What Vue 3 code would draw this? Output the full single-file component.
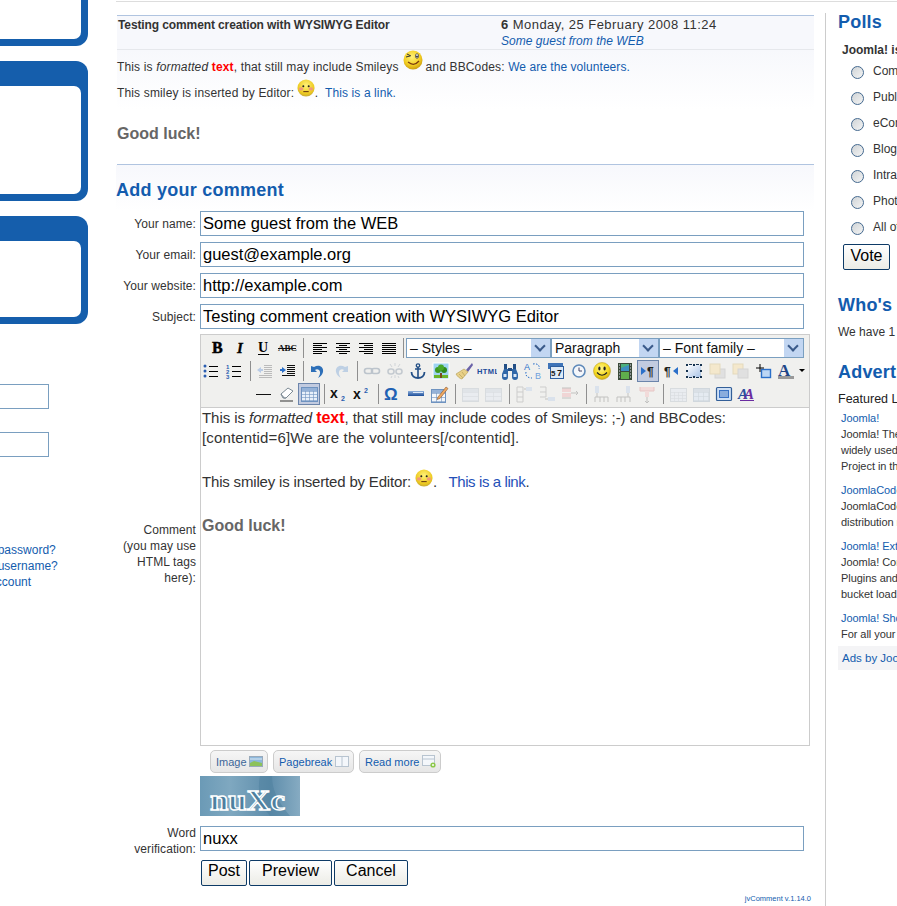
<script setup>
const t = (x, y, size, text, fill = '#000', extra = '') =>
  `<text x="${x}" y="${y}" font-size="${size}" fill="${fill}" font-family="Liberation Sans, sans-serif" ${extra}>${text}</text>`
const bars = (rows, color = '#000') =>
  rows.map(([x, y, w, h = 1]) => `<rect x="${x}" y="${y}" width="${w}" height="${h}" fill="${color}"/>`).join('')
const grid = (x, y, w, h, stroke, fill, cw = 4, ch = 3, head = '') => {
  let s = `<rect x="${x + 0.5}" y="${y + 0.5}" width="${w}" height="${h}" fill="${fill}" stroke="${stroke}"/>`
  if (head) s += `<rect x="${x + 1}" y="${y + 1}" width="${w - 1}" height="3" fill="${head}"/>`
  for (let i = x + cw; i < x + w; i += cw) s += `<rect x="${i}" y="${y + 4}" width="1" height="${h - 4}" fill="${stroke}" opacity=".6"/>`
  for (let j = y + 4; j < y + h; j += ch) s += `<rect x="${x + 1}" y="${j}" width="${w - 1}" height="1" fill="${stroke}" opacity=".6"/>`
  return s
}
const faint = (s) => `<g opacity=".65">${s}</g>`
const smile = `<defs><radialGradient id="sm" cx=".45" cy=".35" r=".7"><stop offset="0" stop-color="#fff68a"/><stop offset=".6" stop-color="#f5d920"/><stop offset="1" stop-color="#c9a410"/></radialGradient></defs><circle cx="10" cy="10" r="8.500" fill="url(#sm)" stroke="#b59a1c" stroke-width=".5"/><ellipse cx="7.400" cy="7.600" rx="1.100" ry="2" fill="#222"/><ellipse cx="12.600" cy="7.600" rx="1.100" ry="2" fill="#222"/><path d="M5 11.500q5 5.500 10 0" fill="none" stroke="#222" stroke-width="1.200"/>`
const serifB = 'font-weight="700" style="font-family:Liberation Serif,serif"'
const icons = {
  bold: t(4, 15, 16, 'B', '#000', serifB + ' stroke="#000" stroke-width=".5"'),
  italic: t(6, 15, 15, 'I', '#000', 'font-weight="700" font-style="italic" stroke="#000" stroke-width=".3" style="font-family:Liberation Serif,serif"'),
  underline: t(4, 14, 14, 'U', '#000', serifB) + bars([[4, 16, 11]]),
  strike: t(1, 13, 9, 'ABC', '#111', serifB) + bars([[1, 10, 18]], '#111'),
  left: bars([[3, 5, 14], [3, 7, 9], [3, 9, 14], [3, 11, 9], [3, 13, 14], [3, 15, 9]]),
  center: bars([[3, 5, 14], [6, 7, 8], [3, 9, 14], [6, 11, 8], [3, 13, 14], [6, 15, 8]]),
  right: bars([[3, 5, 14], [8, 7, 9], [3, 9, 14], [8, 11, 9], [3, 13, 14], [8, 15, 9]]),
  full: bars([[3, 5, 14], [3, 7, 14], [3, 9, 14], [3, 11, 14], [3, 13, 14], [3, 15, 14]]),
  bullets: `<circle cx="4" cy="5" r="1.500" fill="#2a5db0"/><circle cx="4" cy="10" r="1.500" fill="#2a5db0"/><circle cx="4" cy="15" r="1.500" fill="#2a5db0"/>` + bars([[8, 5, 9], [8, 10, 9], [8, 15, 9]]),
  numbers: t(2, 8, 6, '1', '#2a5db0', 'font-weight="700"') + t(2, 13, 6, '2', '#2a5db0', 'font-weight="700"') + t(2, 18, 6, '3', '#2a5db0', 'font-weight="700"') + bars([[8, 5, 9], [8, 10, 9], [8, 15, 9]]),
  outdent: bars([[9, 4, 8], [9, 6, 8], [9, 8, 8], [9, 10, 8], [9, 12, 8], [4, 14, 13], [4, 16, 13]], '#bbb') + `<path d="M2 9l4-3v2h2v2H6v2z" fill="#b8cbe6"/>`,
  indent: bars([[9, 4, 8], [9, 6, 8], [9, 8, 8], [9, 10, 8], [9, 12, 8], [4, 14, 13]], '#111') + `<path d="M8 9L4 6v2H2v2h2v2z" fill="#2a6fc9"/>`,
  undo: `<path d="M6 6c5-3 10 0 9 5-.6 3-3 5-5 6 2-3 3-6 1-8-1.500-1.300-3-.8-4 0l2 2H3V5z" fill="#2d6fb8"/>`,
  redo: `<path d="M14 6c-5-3-10 0-9 5 .6 3 3 5 5 6-2-3-3-6-1-8 1.500-1.300 3-.8 4 0l-2 2h6V5z" fill="#bed0e4"/>`,
  link: `<rect x="2.500" y="7.500" width="8" height="5" rx="2.500" fill="none" stroke="#bcc4cc" stroke-width="1.600"/><rect x="9.500" y="7.500" width="8" height="5" rx="2.500" fill="none" stroke="#bcc4cc" stroke-width="1.600"/>`,
  unlink: `<rect x="3" y="8" width="6" height="5" rx="2.500" fill="none" stroke="#c4cad0" stroke-width="1.600"/><rect x="11" y="8" width="6" height="5" rx="2.500" fill="none" stroke="#c4cad0" stroke-width="1.600"/><path d="M10 2v3M5 3l2 3M15 3l-2 3M10 14v3M6 17l1-2M14 17l-1-2" stroke="#d0d4d8"/>`,
  anchor: `<circle cx="10" cy="4.500" r="1.700" fill="none" stroke="#234f86" stroke-width="1.300"/><path d="M10 6v11M7 8h6" stroke="#234f86" stroke-width="1.600"/><path d="M3.500 11c0 4 3 6 6.500 6s6.500-2 6.500-6" fill="none" stroke="#234f86" stroke-width="1.800"/>`,
  image: `<rect x="2" y="2" width="16" height="16" fill="#9ed4f2" stroke="#fff"/><rect x="3" y="14" width="14" height="3" fill="#6cb52c"/><path d="M9 17h2v-5H9z" fill="#7a4b1e"/><circle cx="7" cy="9" r="3" fill="#3d9a24"/><circle cx="13" cy="9" r="3" fill="#2e8a1c"/><circle cx="10" cy="6.500" r="3" fill="#48a82c"/>`,
  cleanup: `<path d="M18 2l-6 7 2 2 5-7z" fill="#6a62a8"/><path d="M10 8l-8 5c1 2 4 5 6 5l6-7z" fill="#e8d088" stroke="#b09a50" stroke-width=".6"/><path d="M5 13l4 4M8 11l3 4" stroke="#b09a50" stroke-width=".6"/>`,
  html: t(0, 13, 7.500, 'HTML', '#1d4c9a', 'font-weight="700" letter-spacing=".4"'),
  find: `<path d="M4 3h3v5H4zM13 3h3v5h-3z" fill="#234f86"/><rect x="8" y="7" width="4" height="3" fill="#234f86"/><path d="M4 8h4v8a2 2 0 0 1-6 0v-3z" fill="#2f66a8"/><path d="M12 8h4l2 5v3a2 2 0 0 1-6 0z" fill="#2f66a8"/><rect x="3.500" y="13" width="3" height="3" fill="#dbe7f6"/><rect x="13.500" y="13" width="3" height="3" fill="#dbe7f6"/>`,
  replace: t(1, 9, 9, 'A', '#2a6fc9') + t(12, 18, 9, 'B', '#6fa0dc') + `<path d="M10 3c5-1 7 2 6 5M3 11c-1 4 2 6 6 6" fill="none" stroke="#2a6fc9" stroke-dasharray="1.500 1.500"/>`,
  date: `<rect x="2" y="2" width="15" height="6" fill="#3f74b8"/><rect x="4.500" y="5.500" width="13" height="12" fill="#dfeaf6" stroke="#2f5f9f"/>` + t(5, 15, 8, '5', '#222', 'font-weight="700"') + t(11, 15, 9, '7', '#111', 'font-weight="700"'),
  time: `<circle cx="10" cy="10" r="6" fill="#f4f7fb" stroke="#5f8aba" stroke-width="1.600"/><path d="M10 6.500V10h3" fill="none" stroke="#446" />`,
  smiley: smile,
  media: `<rect x="3" y="2" width="14" height="17" fill="#3a4a3a"/><rect x="6" y="3" width="8" height="7" fill="#4cb07c"/><rect x="6" y="11" width="8" height="7" fill="#5fae4c"/><path d="M6 7l8-3v6H6z" fill="#3d8fc0"/><path d="M4 4h1M4 7h1M4 10h1M4 13h1M4 16h1M15 4h1M15 7h1M15 10h1M15 13h1M15 16h1" stroke="#dde" />`,
  ltr: `<path d="M3 6l5 4-5 4z" fill="#2a6fc9"/>` + t(9, 15, 12, '¶', '#222', 'font-weight="700"'),
  rtl: `<path d="M17 6l-5 4 5 4z" fill="#2a6fc9"/>` + t(3, 15, 12, '¶', '#222', 'font-weight="700"'),
  fullscreen: `<defs><linearGradient id="fs" x1="0" y1="0" x2="1" y2="1"><stop offset="0" stop-color="#fff"/><stop offset="1" stop-color="#a9c3e6"/></linearGradient></defs><rect x="3" y="4" width="14" height="12" fill="url(#fs)"/>` + bars([[2, 3, 2, 2], [9, 3, 2, 2], [16, 3, 2, 2], [2, 9, 2, 2], [16, 9, 2, 2], [2, 15, 2, 2], [9, 15, 2, 2], [16, 15, 2, 2]], '#16324f') + bars([[5, 3, 3], [12, 3, 3], [5, 16, 3], [12, 16, 3]], '#16324f'),
  forward: `<rect x="8" y="8" width="10" height="9" fill="#e0e0e0" stroke="#d4d4d4"/><rect x="3" y="3" width="10" height="10" fill="#f4e8cc" stroke="#e4d9bc"/>`,
  backward: `<rect x="3" y="3" width="10" height="10" fill="#f4e8cc" stroke="#e4d9bc"/><rect x="8" y="8" width="10" height="9" fill="#e0e0e0" stroke="#d4d4d4"/>`,
  absolute: `<rect x="8.500" y="8.500" width="9" height="8" fill="#bcd6f4" stroke="#2a6fc9" stroke-width="1.400"/><path d="M7 3v8M3 7h8" stroke="#000"/>`,
  color: t(2, 15, 17, 'A', '#1f4688', serifB) + bars([[2, 15, 16, 3]], '#999'),
  hr: bars([[3, 10, 15]], '#111'),
  eraser: `<path d="M5 10l7-6 5 3-7 7H7z" fill="#fff" stroke="#7c8a94"/><path d="M5 10l3 4 2 0" fill="#c8d0d6" stroke="#7c8a94"/><path d="M4 17h13" stroke="#333"/>`,
  table: grid(2, 3, 16, 14, '#6f93c0', '#e8f0fa', 4, 3, '#95b2d8'),
  sub: t(1, 14, 14, 'x', '#111', 'font-weight="700"') + t(12, 17, 7, '2', '#2a5db0', 'font-weight="700"'),
  sup: t(1, 15, 14, 'x', '#111', 'font-weight="700"') + t(12, 9, 7, '2', '#2a5db0', 'font-weight="700"'),
  omega: t(1, 16, 17, 'Ω', '#1f62b4', 'font-weight="700"'),
  line: `<defs><linearGradient id="ln" x1="0" y1="0" x2="0" y2="1"><stop offset="0" stop-color="#8fb0dc"/><stop offset="1" stop-color="#1a4c98"/></linearGradient></defs><rect x="2" y="7" width="16" height="5" fill="url(#ln)"/><rect x="7" y="8" width="10" height="1" fill="#dbe7f6"/>`,
  edit: grid(2, 5, 14, 13, '#6f93c0', '#f4f7fb', 5, 4, '#95b2d8') + `<path d="M9 13l8-10 2 1.500-8 10-3 1z" fill="#f0a860" stroke="#8a5a30" stroke-width=".6"/>`,
  t1: faint(grid(2, 4, 16, 13, '#ccd2d8', '#e6ebf2', 16, 4, '#d8dee6')),
  t2: faint(grid(2, 4, 16, 13, '#ccd2d8', '#e6ebf2', 8, 4, '#d8dee6')),
  r1: faint(`<path d="M3 3h6M3 8h6M3 13h6M3 18h6M3 3v15M9 3v15" fill="none" stroke="#bbb"/><rect x="12" y="3" width="6" height="4" fill="#cfdcec"/><path d="M10 5h2" stroke="#aaa"/>`),
  r2: faint(`<path d="M3 3h6M3 8h6M3 13h6M9 3v10" fill="none" stroke="#bbb"/><rect x="11" y="13" width="7" height="4" fill="#cfdcec"/><path d="M8 15h3" stroke="#aaa"/>`),
  r3: faint(`<rect x="2" y="4" width="9" height="4" fill="#f0c8c8"/><rect x="2" y="9" width="9" height="4" fill="#f0c8c8"/><path d="M2 4h9M2 14h9M11 9h7M16 7l2 2-2 2" fill="none" stroke="#aaa"/>`),
  c1: faint(`<rect x="4" y="2" width="4" height="7" fill="#cfdcec"/><path d="M6 9v4M4 18v-5h13v5M9 18v-5M13 18v-5" fill="none" stroke="#aaa"/>`),
  c2: faint(`<rect x="12" y="2" width="4" height="7" fill="#cfdcec"/><path d="M14 9v4M3 18v-5h13v5M7 18v-5M11 18v-5" fill="none" stroke="#aaa"/>`),
  c3: faint(`<path d="M3 3v4h14V3" fill="#f4d0d0" stroke="#e2b0b0"/><rect x="8" y="7" width="4" height="6" fill="#f4d0d0"/><path d="M10 13v6M8 17l2 2 2-2" fill="none" stroke="#aaa"/>`),
  t3: faint(grid(2, 4, 16, 13, '#ccd2d8', '#e6ebf2', 4, 3)),
  t4: faint(grid(2, 4, 16, 13, '#c0cad4', '#dfe8f4', 5, 4, '#cfd8e2')),
  frame: `<rect x="2.500" y="3.500" width="15" height="13" rx="1" fill="#cfe0f5" stroke="#335f98" stroke-width="1.200"/><rect x="5" y="6" width="10" height="8" fill="#3a72c4"/><path d="M6 8h8M6 10h8M6 12h8" stroke="#dbe7f6"/>`,
  styleprops: t(1, 15, 15, 'A', '#2a4f9c', 'font-weight="700" font-style="italic" style="font-family:Liberation Serif,serif"') + t(7, 15, 15, 'A', '#6a2ca0', 'font-weight="700" font-style="italic" style="font-family:Liberation Serif,serif"') + bars([[3, 16, 14]], '#6a2ca0')
}
const s = (w) => ({ sep: w })
const row1a = ['bold', 'italic', 'underline', 'strike', s(10), 'left', 'center', 'right', 'full', s(6)]
const row2 = ['bullets', 'numbers', s(8), 'outdent', 'indent', s(7), 'undo', 'redo', s(8), 'link', 'unlink', 'anchor', 'image', 'cleanup', 'html', 'find', 'replace', 'date', 'time', 'smiley', 'media', 'ltr', 'rtl', 'fullscreen', 'forward', 'backward', 'absolute', 'color']
const row3 = ['hr', 'eraser', 'table', s(7), 'sub', 'sup', s(8), 'omega', 'line', 'edit', s(8), 't1', 't2', s(8), 'r1', 'r2', 'r3', s(8), 'c1', 'c2', 'c3', s(8), 't3', 't4', 'frame', 'styleprops']
const active = ['ltr', 'table']
const polls = ['Community Sites', 'Public Brand Sites', 'eCommerce', 'Blogs', 'Intranets', 'Photo and Media Sites', 'All of the Above!']
const ads = [
  { title: 'Joomla!', lines: ['Joomla! The most popular and', 'widely used Open Source CMS', 'Project in the world.'] },
  { title: 'JoomlaCode', lines: ['JoomlaCode, development and', 'distribution made easy.'] },
  { title: 'Joomla! Extensions', lines: ['Joomla! Components, Modules,', 'Plugins and Languages by the', 'bucket load.'] },
  { title: 'Joomla! Shop', lines: ['For all your Joomla! merchandise.'] }
]
</script>

<template>
  <div class="page">
    <aside class="left">
      <div class="box first"><div class="inner i1"></div></div>
      <div class="box"><div class="inner i2"></div></div>
      <div class="box"><div class="inner i3"></div></div>
      <input class="login" type="text" />
      <input class="login second" type="text" />
      <ul class="loginlinks">
        <li>Forgot your password?</li>
        <li>Forgot your username?</li>
        <li>Create an account</li>
      </ul>
    </aside>

    <div class="rest">
      <main class="center">
        <div class="chead">
          <div class="ctitle">Testing comment creation with WYSIWYG Editor</div>
          <div class="cmeta">
            <div class="when"><b>6</b> Monday, 25 February 2008 11:24</div>
            <div class="author">Some guest from the WEB</div>
          </div>
        </div>
        <div class="cbody">
          <p class="l1">This is <em>formatted</em> <b class="red">text</b>, that still may include Smileys
            <svg class="wink" width="20" height="20" viewBox="0 0 20 20">
              <defs><radialGradient id="wk" cx=".45" cy=".35" r=".7"><stop offset="0" stop-color="#fff27a"/><stop offset=".6" stop-color="#f4cf22"/><stop offset="1" stop-color="#c2920e"/></radialGradient></defs>
              <circle cx="10" cy="10" r="9.500" fill="url(#wk)"/>
              <path d="M3 7l4-1M4 4l4 2" stroke="#333" fill="none"/>
              <ellipse cx="14" cy="6" rx="1.600" ry="2.300" fill="#fff" stroke="#333" stroke-width=".7"/><circle cx="14" cy="6.500" r=".9" fill="#222"/>
              <path d="M5 12q6 5 11-1" stroke="#7a3b10" stroke-width="1.200" fill="none"/>
            </svg>
            and BBCodes: <span class="lnk narrow">We are the volunteers.</span></p>
          <p class="l2">This smiley is inserted by Editor:
            <svg class="blush" width="18" height="18" viewBox="0 0 20 20">
              <defs><radialGradient id="bl" cx=".5" cy=".35" r=".7"><stop offset="0" stop-color="#fff27a"/><stop offset=".7" stop-color="#edc91e"/><stop offset="1" stop-color="#b8a040"/></radialGradient></defs>
              <circle cx="10" cy="10" r="9.500" fill="url(#bl)"/>
              <ellipse cx="4.500" cy="11" rx="2.500" ry="1.800" fill="#f09a7a"/><ellipse cx="15.500" cy="11" rx="2.500" ry="1.800" fill="#f09a7a"/>
              <circle cx="7" cy="8" r="1.100" fill="#222"/><circle cx="13" cy="8" r="1.100" fill="#222"/>
              <path d="M7 14h6" stroke="#6a3a10" stroke-width="1.200"/>
            </svg>.&nbsp; <span class="lnk wide">This is a link.</span></p>
          <p class="luck">Good luck!</p>
        </div>

        <section class="add">
          <h2>Add your comment</h2>
          <div class="row first">
            <label>Your name:</label><input class="field" value="Some guest from the WEB" />
          </div>
          <div class="row">
            <label>Your email:</label><input class="field" value="guest@example.org" />
          </div>
          <div class="row">
            <label>Your website:</label><input class="field" value="http://example.com" />
          </div>
          <div class="row">
            <label>Subject:</label><input class="field" value="Testing comment creation with WYSIWYG Editor" />
          </div>
          <div class="row editrow">
            <label class="multi">Comment<br />(you may use<br />HTML tags<br />here):</label>
            <div class="editcol">
              <div class="editor">
                <div class="toolbar">
                  <div class="tb">
                    <template v-for="(it, i) in row1a" :key="i">
                      <span v-if="it.sep" class="sep" :style="{ width: it.sep + 'px' }"></span>
                      <span v-else class="btn"><svg width="20" height="20" viewBox="0 0 20 20" v-html="icons[it]"></svg></span>
                    </template>
                    <div class="sel w1"><span>– Styles –</span><i></i></div>
                    <div class="sel w2"><span>Paragraph</span><i></i></div>
                    <div class="sel w3"><span>– Font family –</span><i></i></div>
                  </div>
                  <div class="tb">
                    <template v-for="(it, i) in row2" :key="i">
                      <span v-if="it.sep" class="sep" :style="{ width: it.sep + 'px' }"></span>
                      <span v-else class="btn" :class="{ on: active.includes(it) }"><svg width="20" height="20" viewBox="0 0 20 20" v-html="icons[it]"></svg></span>
                    </template>
                    <span class="caret"></span>
                  </div>
                  <div class="tb">
                    <template v-for="(it, i) in row3" :key="i">
                      <span v-if="it.sep" class="sep" :style="{ width: it.sep + 'px' }"></span>
                      <span v-else class="btn" :class="{ on: active.includes(it) }"><svg width="20" height="20" viewBox="0 0 20 20" v-html="icons[it]"></svg></span>
                    </template>
                  </div>
                </div>
                <div class="content">
                  <p><span class="ls1">This is <em>formatted</em> <b class="red">text</b>, that still may include codes of Smileys: ;-) and BBCodes:</span><br /><span class="ls2">[contentid=6]We are the volunteers[/contentid].</span></p>
                  <p class="ed2"><span class="ls3">This smiley is inserted by Editor:</span>
                    <svg class="edb" width="18" height="18" viewBox="0 0 20 20">
                      <defs><radialGradient id="bl2" cx=".5" cy=".35" r=".7"><stop offset="0" stop-color="#fff27a"/><stop offset=".7" stop-color="#edc91e"/><stop offset="1" stop-color="#b8a040"/></radialGradient></defs>
                      <circle cx="10" cy="10" r="9.500" fill="url(#bl2)"/>
                      <ellipse cx="4.500" cy="11" rx="2.500" ry="1.800" fill="#f09a7a"/><ellipse cx="15.500" cy="11" rx="2.500" ry="1.800" fill="#f09a7a"/>
                      <circle cx="7" cy="8" r="1.100" fill="#222"/><circle cx="13" cy="8" r="1.100" fill="#222"/>
                      <path d="M7 14h6" stroke="#6a3a10" stroke-width="1.200"/>
                    </svg>.&nbsp; <span class="edlnk">This is a link</span>.</p>
                  <p class="edluck">Good luck!</p>
                </div>
              </div>
              <div class="xbtns">
                <span class="xbtn b1">Image
                  <svg width="14" height="11" viewBox="0 0 14 11"><rect x=".5" y=".5" width="13" height="10" fill="#8db8dc" stroke="#9ab"/><path d="M1 7l4-2 8 2v3H1z" fill="#8cc25a"/><path d="M1 3h12" stroke="#dfeaf4"/></svg>
                </span>
                <span class="xbtn b2">Pagebreak
                  <svg width="14" height="11" viewBox="0 0 14 11"><rect x=".5" y=".5" width="13" height="10" fill="#f4f7fb" stroke="#b8c4d0"/><path d="M7 1v9" stroke="#b8c4d0"/></svg>
                </span>
                <span class="xbtn b3">Read more
                  <svg width="14" height="13" viewBox="0 0 14 13"><rect x=".5" y=".5" width="12" height="10" fill="#f4f7fb" stroke="#b8c4d0"/><path d="M1 4h11" stroke="#b8c4d0"/><circle cx="11" cy="10" r="2.600" fill="#8cc84a"/><circle cx="11" cy="10" r="1" fill="#fff"/></svg>
                </span>
              </div>
            </div>
          </div>
          <div class="row cap">
            <label></label>
            <svg class="captcha" width="100" height="40" viewBox="0 0 100 40">
              <defs><linearGradient id="cp" x1="0" y1="0" x2="1" y2="0"><stop offset="0" stop-color="#6b9ab6"/><stop offset=".3" stop-color="#7fa8c0"/><stop offset=".7" stop-color="#5e8dab"/><stop offset="1" stop-color="#86abc2"/></linearGradient></defs>
              <rect width="100" height="40" fill="url(#cp)"/>
              <path d="M60 0c-3 14 0 28 10 40h20C78 26 72 14 72 0z" fill="#4d7f9e" opacity=".5"/>
              <text x="10" y="34" font-size="30" font-weight="700" textLength="75" lengthAdjust="spacingAndGlyphs" fill="#4d7f9e" stroke="#fff" stroke-width="1.300" font-family="Liberation Serif, serif">nuXc</text>
            </svg>
          </div>
          <div class="row verif">
            <label class="two">Word<br />verification:</label><input class="field" value="nuxx" />
          </div>
          <div class="actions">
            <button class="act p1">Post</button>
            <button class="act p2">Preview</button>
            <button class="act p3">Cancel</button>
          </div>
          <div class="version">jvComment v.1.14.0</div>
        </section>
      </main>

      <aside class="right">
        <h3 class="polls">Polls</h3>
        <div class="pq">Joomla! is used for?</div>
        <div v-for="p in polls" :key="p" class="poll"><input type="radio" name="poll" /><span>{{ p }}</span></div>
        <button class="vote">Vote</button>
        <h3 class="who">Who's Online</h3>
        <div class="online">We have 1 guest online</div>
        <h3 class="adv">Advertisement</h3>
        <div class="feat">Featured Links:</div>
        <div v-for="a in ads" :key="a.title" class="ad">
          <div class="adt">{{ a.title }}</div>
          <div v-for="l in a.lines" :key="l">{{ l }}</div>
        </div>
        <div class="adsby">Ads by Joomla!</div>
      </aside>
    </div>
  </div>
</template>

<style scoped>
.page { display: flex; width: 897px; height: 906px; overflow: hidden; background: #fff; font-family: "Liberation Sans", Arial, sans-serif; font-size: 12px; color: #333; }
.left { width: 116px; flex: none; overflow: hidden; }
.box { margin: 15px 0 0 -112px; width: 200px; box-sizing: border-box; background: #155eac; border-radius: 12px; padding: 25px 7px 7px 0; }
.box.first { margin-top: -40px; }
.inner { background: #fff; border-radius: 7px; }
.i1 { height: 54px; }
.i2 { height: 108px; }
.i3 { height: 76px; }
.login { display: block; margin: 60px 0 0 -40px; width: 89px; height: 25px; box-sizing: border-box; border: 1px solid #7a9fc0; background: #fff; padding: 0; }
.login.second { margin-top: 23px; }
.loginlinks { list-style: none; margin: 85px 0 0 -67px; padding: 0; width: 180px; color: #135cae; line-height: 16px; white-space: nowrap; }
.rest { flex: 1; min-width: 0; display: flex; align-items: flex-start; margin-top: 1px; border-top: 1px solid #ddd; height: 904px; padding-top: 11px; box-sizing: border-box; }
.center { width: 698px; flex: none; margin-top: 2px; }
.chead { display: flex; height: 35px; box-sizing: border-box; background: #f7f8fc; border-top: 1px solid #b0c4e0; border-bottom: 1px solid #e6e8ec; margin-left: 1px; line-height: 16px; padding-top: 1px; }
.ctitle { width: 384px; padding-left: 1px; box-sizing: border-box; font-weight: 700; color: #333; letter-spacing: -.11px; }
.cmeta { color: #333; }
.when { font-size: 13px; letter-spacing: .45px; white-space: nowrap; }
.author { color: #135cae; font-style: italic; letter-spacing: .03px; }
.cbody { height: 115px; margin-left: 1px; background: linear-gradient(#f7f8fc, #fff 60px); border-bottom: 1px solid #b0c4e0; box-sizing: border-box; letter-spacing: .15px; }
.cbody p { margin: 0; white-space: nowrap; }
.l1 { height: 23px; line-height: 34px; }
.l2 { height: 27px; padding-top: 2px; line-height: 36px; }
.red { color: #f00; }
.lnk { color: #135cae; }
.narrow { letter-spacing: .05px; }
.wide { letter-spacing: .1px; }
.wink { vertical-align: 1px; margin: 0 -1px 0 1px; }
.blush { vertical-align: 0; margin-left: -1px; }
.cbody .luck { font-size: 16px; font-weight: 700; color: #666; line-height: 20px; margin-top: 22px; letter-spacing: 0; }
.add { background: linear-gradient(#f7f8fc, #fff 46px); }
h2 { margin: 0; padding-top: 14px; font-size: 18px; line-height: 22px; color: #135cae; font-weight: 700; letter-spacing: .25px; }
.row { display: flex; margin-top: 6px; }
.row.first { margin-top: 10px; }
.row label { width: 84px; height: 25px; flex: none; box-sizing: border-box; padding-right: 4px; text-align: right; line-height: 26px; color: #333; letter-spacing: .08px; }
.row label.multi { line-height: 16px; height: auto; align-self: center; }
.row label.two { line-height: 16px; margin-top: -1px; }
.field { width: 604px; height: 25px; box-sizing: border-box; border: 1px solid #7a9fc0; padding: 0 2px; font-size: 16.500px; font-family: "Liberation Sans", Arial, sans-serif; color: #000; background: #fff; outline: none; }
.editrow { margin-top: 5px; }
.editcol { width: 610px; }
.editor { height: 412px; box-sizing: border-box; border: 1px solid #ccc; background: #fff; }
.toolbar { background: #f0f0ee; height: 73px; box-sizing: border-box; padding-top: 1px; border-bottom: 1px solid #ccc; }
.tb { display: flex; justify-content: center; align-items: center; height: 23px; }
.btn { width: 23px; height: 22px; flex: none; display: flex; align-items: center; justify-content: center; box-sizing: border-box; }
.btn.on { background: #c2cbe0; border: 1px solid #6c85ab; width: 22px; margin: 0 .5px; }
.btn.on svg { margin: 0 -2px; }
.sep { flex: none; height: 20px; position: relative; }
.sep::after { content: ""; position: absolute; left: 50%; top: 0; bottom: 0; width: 1px; background: #8f8f8f; }
.sel { height: 20px; box-sizing: border-box; border: 1px solid #7a9fc0; display: flex; align-items: center; justify-content: space-between; background: #fff; flex: none; font-size: 14px; color: #111; padding-left: 3px; white-space: nowrap; }
.w1 { width: 145px; }
.w2 { width: 108px; }
.w3 { width: 145px; }
.sel i { width: 19px; height: 18px; background: #c2d6f2; position: relative; flex: none; }
.sel i::after { content: ""; position: absolute; left: 5px; top: 3px; width: 8px; height: 8px; border-right: 2px solid #3a5a8a; border-bottom: 2px solid #3a5a8a; transform: rotate(45deg); box-sizing: border-box; }
.caret { width: 0; height: 0; margin: 0 6px 0 1px; border: 3px solid transparent; border-top: 3px solid #000; border-bottom: 0; flex: none; }
.content { padding: 0 1px; font-size: 15px; line-height: 20px; color: #333; }
.content p { margin: 0; white-space: nowrap; }
.content .red { font-size: 16px; }
.ls1 { letter-spacing: -.05px; }
.ls2 { letter-spacing: .15px; }
.ls3 { letter-spacing: -.18px; }
.edb { vertical-align: 0; margin-left: 4px; }
.content .ed2 { margin-top: 21px; }
.content .edluck { margin-top: 24px; font-size: 16px; font-weight: 700; color: #666; }
.edlnk { color: #2450b8; letter-spacing: -.4px; margin-left: 3px; }
.xbtns { display: flex; margin: 4px 0 0 10px; gap: 5px; height: 23px; }
.xbtn { display: flex; align-items: center; justify-content: space-between; box-sizing: border-box; padding: 0 4px 0 5px; height: 23px; border: 1px solid #ccc; border-radius: 5px; background: linear-gradient(#f6f6f6, #e6e6e6); font-size: 11px; color: #135cae; }
.b1 { width: 58px; color: #3d6699; }
.b2 { width: 81px; }
.b3 { width: 82px; }
.cap { margin-top: 3px; }
.captcha { display: block; }
.verif { margin-top: 10px; }
.actions { display: flex; margin: 9px 0 0 85px; gap: 2px; }
.act { height: 26px; box-sizing: border-box; border: 1px solid #0d3a66; border-radius: 2px; background: linear-gradient(#fff, #ecece6); font: 16px "Liberation Sans", Arial, sans-serif; color: #000; padding: 0 0 4px; }
.p1 { width: 46px; }
.p2 { width: 83px; }
.p3 { width: 74px; }
.version { width: 695px; text-align: right; font-size: 7.500px; line-height: 10px; color: #135cae; margin-top: 8px; }
.right { margin-left: 11px; flex: 1; min-width: 0; height: 893px; border-left: 1px solid #ccc; overflow: hidden; white-space: nowrap; padding-left: 12px; box-sizing: border-box; }
h3 { margin: 0; font-size: 18px; line-height: 22px; color: #135cae; font-weight: 700; letter-spacing: .2px; }
.polls { margin-top: -2px; }
.pq { font-weight: 700; margin: 9px 0 0 4px; line-height: 16px; color: #333; }
.poll { display: flex; align-items: center; height: 26px; padding-left: 13px; }
.poll:first-of-type { margin-top: 2px; }
.poll input { appearance: none; -webkit-appearance: none; width: 13px; height: 13px; margin: 2px 9px 0 0; border: 1.500px solid #44698f; border-radius: 50%; background: linear-gradient(135deg, #cfd3d6, #f4f4f4); box-sizing: border-box; flex: none; }
.vote { display: block; margin: 4px 0 0 5px; width: 47px; height: 26px; box-sizing: border-box; border: 1px solid #0d3a66; border-radius: 2px; background: linear-gradient(#fff, #ecece6); font: 16px "Liberation Sans", Arial, sans-serif; color: #000; padding: 0 0 2px; }
.who { margin-top: 24px; }
.online { margin-top: 8px; line-height: 16px; }
.adv { margin-top: 21px; }
.feat { margin-top: 8px; line-height: 16px; font-size: 12.500px; color: #222; }
.ad { font-size: 11px; line-height: 16px; padding-left: 3px; margin-bottom: 8px; color: #333; letter-spacing: -.05px; }
.feat + .ad { margin-top: 3px; }
.adt { color: #135cae; }
.adsby { margin-top: -4px; background: #f4f4f6; height: 24px; line-height: 24px; font-size: 11.500px; padding-left: 4px; color: #135cae; }
</style>
